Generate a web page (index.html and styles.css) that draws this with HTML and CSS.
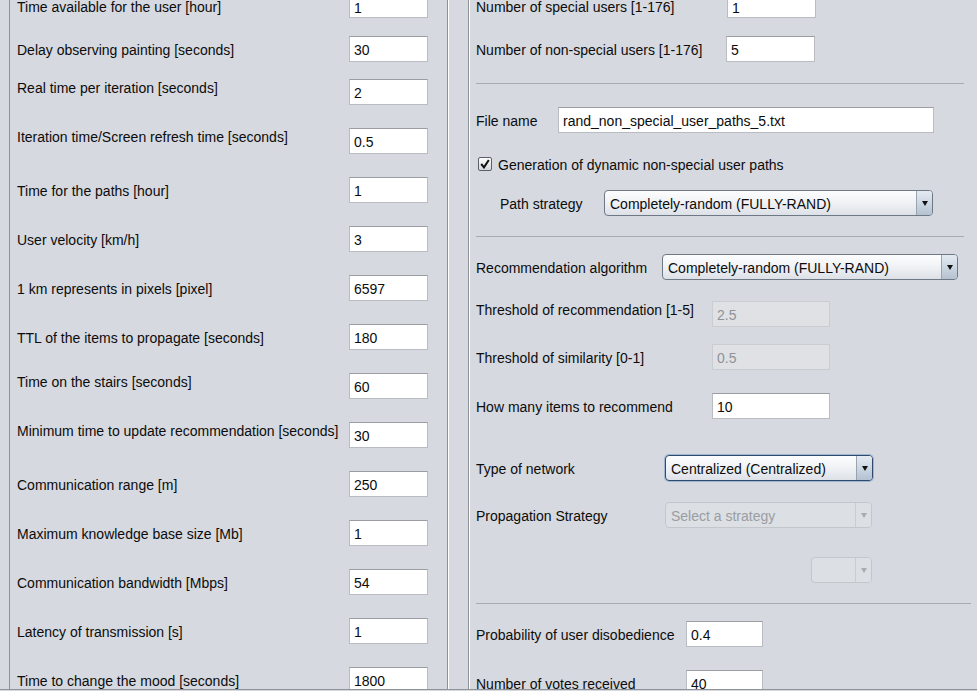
FILE: index.html
```html
<!DOCTYPE html>
<html>
<head>
<meta charset="utf-8">
<link rel="stylesheet" href="styles.css">
</head>
<body>
<div class="frame">
  <div class="left">
    <div class="list">
      <div class="lrow"><span class="lbl first">Time available for the user [hour]</span><span class="field first">1</span></div>
      <div class="lrow r2"><span class="lbl">Delay observing painting [seconds]</span><span class="field">30</span></div>
      <div class="lrow r3"><span class="lbl up">Real time per iteration [seconds]</span><span class="field">2</span></div>
      <div class="lrow"><span class="lbl up">Iteration time/Screen refresh time [seconds]</span><span class="field">0.5</span></div>
      <div class="lrow"><span class="lbl">Time for the paths [hour]</span><span class="field">1</span></div>
      <div class="lrow"><span class="lbl">User velocity [km/h]</span><span class="field">3</span></div>
      <div class="lrow"><span class="lbl">1 km represents in pixels [pixel]</span><span class="field">6597</span></div>
      <div class="lrow"><span class="lbl">TTL of the items to propagate [seconds]</span><span class="field">180</span></div>
      <div class="lrow"><span class="lbl up">Time on the stairs [seconds]</span><span class="field">60</span></div>
      <div class="lrow"><span class="lbl up">Minimum time to update recommendation [seconds]</span><span class="field">30</span></div>
      <div class="lrow"><span class="lbl">Communication range [m]</span><span class="field">250</span></div>
      <div class="lrow"><span class="lbl">Maximum knowledge base size [Mb]</span><span class="field">1</span></div>
      <div class="lrow"><span class="lbl">Communication bandwidth [Mbps]</span><span class="field">54</span></div>
      <div class="lrow"><span class="lbl">Latency of transmission [s]</span><span class="field">1</span></div>
      <div class="lrow"><span class="lbl">Time to change the mood [seconds]</span><span class="field">1800</span></div>
    </div>
  </div>

  <div class="right">
    <div class="rlist">
      <div class="row m0"><span class="rl w251 first">Number of special users [1-176]</span><span class="field w89 first">1</span></div>
      <div class="row m18"><span class="rl w250">Number of non-special users [1-176]</span><span class="field w89">5</span></div>
      <div class="sep m21 s1"></div>
      <div class="row m23"><span class="rl w82">File name</span><span class="field w376">rand_non_special_user_paths_5.txt</span></div>
      <div class="crow m24">
        <span class="check"><svg width="10" height="10" viewBox="0 0 10 10"><path d="M1.2 5 L4 8.4 L8.8 1" fill="none" stroke="#111" stroke-width="2"/></svg></span>
        <span class="clbl">Generation of dynamic non-special user paths</span>
      </div>
      <div class="row m19 ind"><span class="rl w104">Path strategy</span><span class="combo w329"><span class="ctext">Completely-random (FULLY-RAND)</span><span class="carrow"><i class="tri"></i></span></span></div>
      <div class="sep m20 s1"></div>
      <div class="row m17"><span class="rl w186">Recommendation algorithm</span><span class="combo w296"><span class="ctext">Completely-random (FULLY-RAND)</span><span class="carrow"><i class="tri"></i></span></span></div>
      <div class="row m21"><span class="rl w236 up">Threshold of recommendation [1-5]</span><span class="field dis w118">2.5</span></div>
      <div class="row m17"><span class="rl w236">Threshold of similarity [0-1]</span><span class="field dis w118">0.5</span></div>
      <div class="row m23"><span class="rl w236">How many items to recommend</span><span class="field w118">10</span></div>
      <div class="row m36"><span class="rl w189">Type of network</span><span class="combo focus w208"><span class="ctext">Centralized (Centralized)</span><span class="carrow"><i class="tri"></i></span></span></div>
      <div class="row m21"><span class="rl w189">Propagation Strategy</span><span class="combo cdis w207"><span class="ctext">Select a strategy</span><span class="carrow"><i class="tri"></i></span></span></div>
      <div class="row m29"><span class="rl w335"></span><span class="combo cdis w61"><span class="ctext"></span><span class="carrow"><i class="tri"></i></span></span></div>
      <div class="sep m20 s2"></div>
      <div class="row m17"><span class="rl w210">Probability of user disobedience</span><span class="field w77">0.4</span></div>
      <div class="row m23"><span class="rl w210">Number of votes received</span><span class="field w77">40</span></div>
    </div>
  </div>
</div>
</body>
</html>
```

FILE: styles.css
```css
html, body {
  margin: 0;
  padding: 0;
  background: #d6d9df;
}

body {
  font-family: "Liberation Sans", Arial, sans-serif;
  font-size: 14px;
  color: #0c0c0c;
}

.frame {
  display: flex;
  height: 689px;
  padding-left: 9px;
  border-bottom: 1px solid #8f9297;
  overflow: hidden;
}

.left {
  width: 437px;
  flex: none;
  border-left: 1px solid #8f9297;
  border-right: 1px solid #8f9297;
  box-shadow: 1px 0 0 #ffffff;
  overflow: hidden;
}

.list {
  display: flex;
  flex-direction: column;
  gap: 23px;
  margin-top: -8px;
  padding-left: 7px;
}

.lrow {
  display: flex;
  align-items: center;
  height: 26px;
  flex: none;
}

.lrow.r2 { margin-top: -5px; }
.lrow.r3 { margin-top: -6px; }

.lbl {
  width: 332px;
  flex: none;
  white-space: nowrap;
  padding-top: 2px;
}

.rl {
  flex: none;
  white-space: nowrap;
  padding-top: 2px;
}

.up {
  padding-bottom: 11px;
}

.lbl.first, .rl.first {
  padding-top: 4px;
}

.field {
  box-sizing: border-box;
  height: 26px;
  width: 79px;
  flex: none;
  background: #ffffff;
  border: 1px solid #b9bcc1;
  border-top-color: #9a9da2;
  padding-left: 4px;
  padding-top: 2px;
  display: flex;
  align-items: center;
  white-space: nowrap;
}

.field.first {
  padding-top: 5px;
}

.field.dis {
  background: #dfe1e5;
  border-color: #c9ccd1;
  color: #8f9296;
}

.right {
  flex: 1;
  margin-left: 20px;
  border-left: 1px solid #8f9297;
  box-shadow: inset 1px 0 0 #ffffff;
  overflow: hidden;
}

.rlist {
  display: flex;
  flex-direction: column;
  margin-top: -8px;
  padding-left: 7px;
}

.row {
  display: flex;
  align-items: center;
  height: 26px;
  flex: none;
}

.ind { padding-left: 24px; }

.crow {
  display: flex;
  align-items: center;
  height: 14px;
  padding-left: 2px;
}

.check {
  box-sizing: border-box;
  width: 14px;
  height: 14px;
  border: 1px solid #5b6068;
  border-radius: 2px;
  background: linear-gradient(#fdfdfe, #d3d8df);
  display: flex;
  align-items: center;
  justify-content: center;
}

.clbl {
  margin-left: 6px;
  white-space: nowrap;
  padding-top: 1px;
}

.sep {
  height: 1px;
  background: #a7aab0;
  flex: none;
}
.s1 { width: 488px; }
.s2 { width: 495px; }

.combo {
  box-sizing: border-box;
  height: 26px;
  flex: none;
  display: flex;
  border: 1px solid #6f7986;
  border-radius: 4px;
  background: linear-gradient(#fdfdfe 0%, #f1f3f6 45%, #dde1e7 100%);
  overflow: hidden;
}

.ctext {
  flex: 1;
  display: flex;
  align-items: center;
  padding-left: 5px;
  padding-top: 1px;
  white-space: nowrap;
}

.carrow {
  width: 15px;
  flex: none;
  border-left: 1px solid #9aa4b1;
  background: linear-gradient(#e4eaf1 0%, #cdd7e3 50%, #b4c1d1 100%);
  display: flex;
  align-items: center;
  justify-content: center;
}

.tri {
  width: 0;
  height: 0;
  border-left: 3.5px solid transparent;
  border-right: 3.5px solid transparent;
  border-top: 5px solid #111;
}

.combo.focus {
  border-color: #2e4b6e;
  box-shadow: 0 0 0 1px #9fb6d2;
}

.combo.cdis {
  border-color: #c3c7cd;
  background: #dcdfe4;
}
.combo.cdis .ctext { color: #9a9da2; }
.combo.cdis .carrow {
  border-left-color: #c9ccd1;
  background: #dcdfe4;
}
.combo.cdis .tri { border-top-color: #a9acb1; }

.m0 { margin-top: 0; }
.m17 { margin-top: 17px; }
.m18 { margin-top: 18px; }
.m19 { margin-top: 19px; }
.m20 { margin-top: 20px; }
.m21 { margin-top: 21px; }
.m23 { margin-top: 23px; }
.m24 { margin-top: 24px; }
.m29 { margin-top: 29px; }
.m36 { margin-top: 36px; }

.w61 { width: 61px; }
.w77 { width: 77px; }
.w82 { width: 82px; }
.w89 { width: 89px; }
.w104 { width: 104px; }
.w118 { width: 118px; }
.w186 { width: 186px; }
.w189 { width: 189px; }
.w207 { width: 207px; }
.w208 { width: 208px; }
.w210 { width: 210px; }
.w236 { width: 236px; }
.w250 { width: 250px; }
.w251 { width: 251px; }
.w296 { width: 296px; }
.w329 { width: 329px; }
.w335 { width: 335px; }
.w376 { width: 376px; }
```
